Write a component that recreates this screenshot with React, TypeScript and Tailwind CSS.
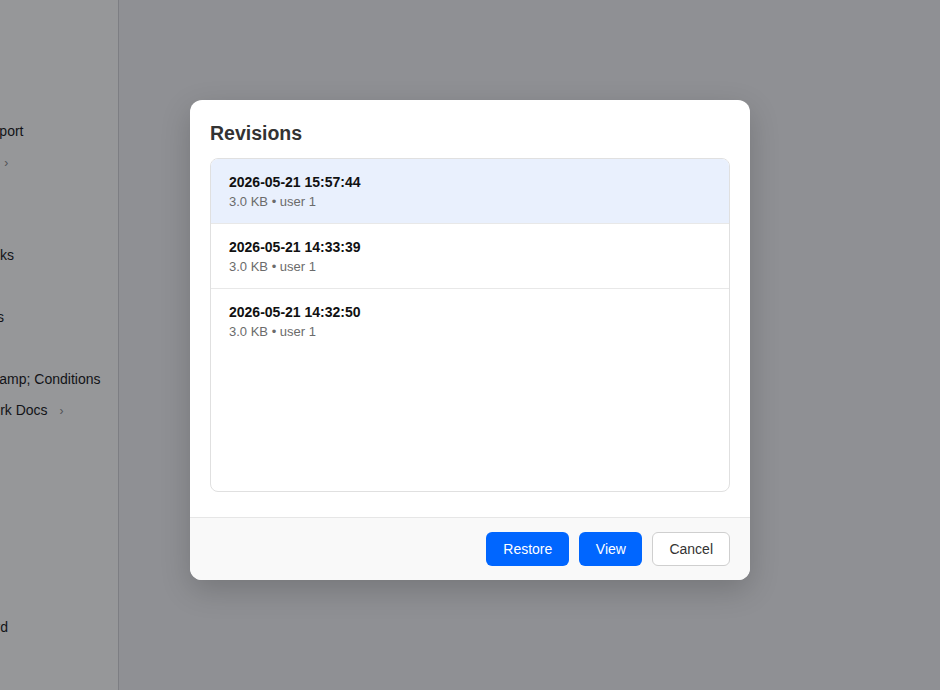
const navItems: { label: string; chevron?: boolean }[] = [
  { label: "Get Support" },
  { label: "Guides", chevron: true },
  { label: "Home" },
  { label: "Blog" },
  { label: "Webhooks" },
  { label: "API" },
  { label: "Analytics" },
  { label: "Logs" },
  { label: "Terms &amp; Conditions" },
  { label: "Teamwork Docs", chevron: true },
  { label: "Help" },
  { label: "FAQ" },
  { label: "Users" },
  { label: "Tags" },
  { label: "Plans" },
  { label: "Teams" },
  { label: "Keyboard" },
  { label: "Logout" },
]

const revisions = [
  { time: "2026-05-21 15:57:44", size: "3.0 KB", user: "user 1" },
  { time: "2026-05-21 14:33:39", size: "3.0 KB", user: "user 1" },
  { time: "2026-05-21 14:32:50", size: "3.0 KB", user: "user 1" },
]

export default function App() {
  const selected = 0

  return (
    <div className="relative flex h-[690px] w-full overflow-hidden bg-[#f3f3f6] font-['Liberation_Sans',Arial,sans-serif]">
      {/* sidebar (scrolled horizontally, text clipped) */}
      <aside className="w-[119px] shrink-0 overflow-hidden border-r border-[#d4d4da] bg-white">
        <nav className="-ml-[52px] flex flex-col pt-[116px]">
          {navItems.map((item) => (
            <div key={item.label} className="flex h-[31px] items-center whitespace-nowrap text-[14px] text-[#1d1d1f]">
              <span>{item.label}</span>
              {item.chevron && <span className="ml-3 text-[12px] text-[#8a8a8e]">›</span>}
            </div>
          ))}
        </nav>
      </aside>
      <main className="flex-1" />

      {/* modal */}
      <div className="absolute inset-0 flex justify-center bg-[rgba(4,6,12,0.42)] pt-[100px]">
        <div className="flex h-[480px] w-[560px] flex-col overflow-hidden rounded-xl bg-white shadow-[0_10px_30px_rgba(0,0,0,0.18)]">
          <div className="px-5 pb-[25px] pt-5">
            <h2 className="mb-3 text-[19.5px] font-bold leading-[26px] text-[#333333]">Revisions</h2>
            <div className="h-[334px] divide-y divide-[#e8e8e8] overflow-hidden rounded-lg border border-[#e0e0e0]">
              {revisions.map((r, i) => (
                <div
                  key={r.time}
                  className={"px-[18px] pb-[13px] pt-[14px] " + (i === selected ? "bg-[#e9f0fd]" : "bg-white")}
                >
                  <div className="text-[14px] font-bold leading-[18px] text-[#111111]">{r.time}</div>
                  <div className="mt-[2px] text-[13px] leading-[17px] text-[#6b6b6b]">
                    {r.size} • {r.user}
                  </div>
                </div>
              ))}
            </div>
          </div>
          <div className="flex flex-1 items-center justify-end gap-[10px] border-t border-[#e6e6e6] bg-[#f9f9f9] px-5">
            <button className="h-[34px] rounded-md bg-[#0066ff] px-[17px] text-[14px] text-white">Restore</button>
            <button className="h-[34px] rounded-md bg-[#0066ff] px-[16.5px] text-[14px] text-white">View</button>
            <button className="h-[34px] rounded-md border border-[#cfcfcf] bg-white px-4 text-[14px] text-[#333333]">
              Cancel
            </button>
          </div>
        </div>
      </div>
    </div>
  )
}
